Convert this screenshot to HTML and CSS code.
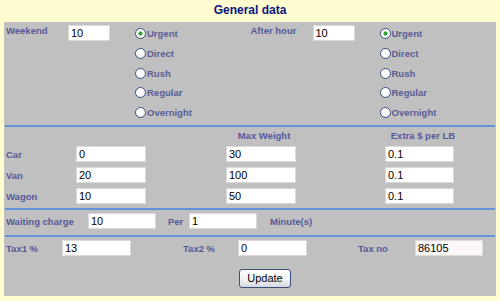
FILE: index.html
```html
<!DOCTYPE html>
<html lang="en">
<head>
    <meta charset="UTF-8">
    <title>General data</title>
    <link rel="stylesheet" href="styles.css">
</head>
<body>
    <h1 class="title">General data</h1>

    <div class="panel">
        <div class="section rates">
            <div class="half">
                <span class="label">Weekend</span>
                <input class="field small" type="text" value="10">
                <div class="options">
                    <label class="opt"><input type="radio" name="weekend" checked>Urgent</label>
                    <label class="opt"><input type="radio" name="weekend">Direct</label>
                    <label class="opt"><input type="radio" name="weekend">Rush</label>
                    <label class="opt"><input type="radio" name="weekend">Regular</label>
                    <label class="opt"><input type="radio" name="weekend">Overnight</label>
                </div>
            </div>
            <div class="half">
                <span class="label">After hour</span>
                <input class="field small" type="text" value="10">
                <div class="options">
                    <label class="opt"><input type="radio" name="after" checked>Urgent</label>
                    <label class="opt"><input type="radio" name="after">Direct</label>
                    <label class="opt"><input type="radio" name="after">Rush</label>
                    <label class="opt"><input type="radio" name="after">Regular</label>
                    <label class="opt"><input type="radio" name="after">Overnight</label>
                </div>
            </div>
        </div>

        <div class="section vehicles">
            <span></span>
            <span></span>
            <span class="label head">Max Weight</span>
            <span class="label head">Extra $ per LB</span>

            <span class="label">Car</span>
            <input class="field" type="text" value="0">
            <input class="field" type="text" value="30">
            <input class="field" type="text" value="0.1">

            <span class="label">Van</span>
            <input class="field" type="text" value="20">
            <input class="field" type="text" value="100">
            <input class="field" type="text" value="0.1">

            <span class="label">Wagon</span>
            <input class="field" type="text" value="10">
            <input class="field" type="text" value="50">
            <input class="field" type="text" value="0.1">
        </div>

        <div class="section waiting">
            <span class="label wait-label">Waiting charge</span>
            <input class="field" type="text" value="10">
            <span class="label per-label">Per</span>
            <input class="field" type="text" value="1">
            <span class="label">Minute(s)</span>
        </div>

        <div class="section taxes">
            <div class="tax-row">
                <span class="label">Tax1 %</span>
                <input class="field" type="text" value="13">
                <span class="label">Tax2 %</span>
                <input class="field" type="text" value="0">
                <span class="label">Tax no</span>
                <input class="field readonly" type="text" value="86105" readonly>
            </div>
            <div class="actions">
                <button class="btn" type="button">Update</button>
            </div>
        </div>
    </div>
</body>
</html>
```

FILE: styles.css
```css
body {
    margin: 0;
    background-color: #fffcd0;
    font-family: "Liberation Sans", Arial, sans-serif;
}

.title {
    margin: 0;
    height: 22px;
    padding-top: 3px;
    box-sizing: border-box;
    font-size: 12px;
    line-height: 14px;
    text-align: center;
    color: #0c1580;
}

.panel {
    margin: 0 4px;
    height: 274px;
    background-color: #c0c0c0;
}

.section {
    box-sizing: border-box;
    margin: 0 1px;
    padding-left: 1px;
}

.label {
    font-size: 9.5px;
    font-weight: bold;
    color: #56589a;
    white-space: nowrap;
}

.field {
    box-sizing: border-box;
    height: 16px;
    margin: 0;
    padding: 0 2px;
    border: 1px solid #dadada;
    background: #fff;
    font-family: "Liberation Sans", Arial, sans-serif;
    font-size: 11px;
    color: #000;
}

.field.readonly {
    background: #fdf6f6;
}

/* weekend / after hour */
.rates {
    display: flex;
    height: 105px;
    padding-top: 3px;
    border-bottom: 2px solid #6690d8;
}

.half {
    width: 245px;
    display: grid;
    grid-template-columns: 62px 42px 1fr;
    align-items: start;
}

.half .label {
    line-height: 10px;
    padding-top: 1px;
}

.options {
    display: flex;
    flex-direction: column;
    margin-left: 25px;
    margin-top: -1px;
}

.opt {
    display: flex;
    align-items: center;
    height: 19.7px;
    font-size: 9.5px;
    font-weight: bold;
    color: #5a5c96;
}

.opt input {
    appearance: none;
    -webkit-appearance: none;
    box-sizing: border-box;
    width: 11px;
    height: 11px;
    margin: 0 1px 0 0;
    border: 1px solid #3c5080;
    border-radius: 50%;
    background: radial-gradient(circle at 40% 35%, #ffffff 40%, #dde3ee 100%);
}

.opt input:checked {
    background: radial-gradient(circle, #2fa52f 0 1.8px, #ffffff 2.4px 60%, #dde3ee 100%);
}

/* vehicles */
.vehicles {
    display: grid;
    grid-template-columns: 70px 150px 159px 69px;
    grid-template-rows: 14px 16px 16px 16px;
    row-gap: 5px;
    align-items: center;
    height: 83px;
    padding-bottom: 4px;
    border-bottom: 2px solid #6690d8;
}

.vehicles .field {
    width: 70px;
}

.vehicles .field:nth-child(4n) {
    width: 69px;
}

.vehicles .head {
    align-self: start;
    width: 70px;
    padding-top: 4px;
    padding-left: 3px;
    line-height: 10px;
    text-align: center;
}

/* waiting */
.waiting {
    display: flex;
    align-items: center;
    height: 27px;
    padding-top: 3px;
    padding-bottom: 6px;
    border-bottom: 2px solid #6690d8;
}

.waiting .field {
    width: 68px;
}

.wait-label {
    width: 82px;
}

.per-label {
    width: 21px;
    margin-left: 12px;
}

.waiting .field + .label:last-child {
    margin-left: 13px;
}

/* taxes */
.taxes {
    padding-top: 3px;
}

.tax-row {
    display: grid;
    grid-template-columns: 56px 69px 52px 55px 69px 51px 57px 68px;
    align-items: center;
}

.tax-row .label:nth-of-type(2) {
    grid-column: 4;
}

.tax-row .label:nth-of-type(3) {
    grid-column: 7;
}

.actions {
    padding-top: 12px;
    padding-left: 233px;
}

.btn {
    width: 52px;
    height: 19px;
    padding: 0;
    border: 1px solid #3b4f7e;
    border-radius: 3px;
    background: linear-gradient(#ffffff, #f4f4f6 55%, #d6d8de);
    font-family: "Liberation Sans", Arial, sans-serif;
    font-size: 11px;
    color: #000;
}
```
